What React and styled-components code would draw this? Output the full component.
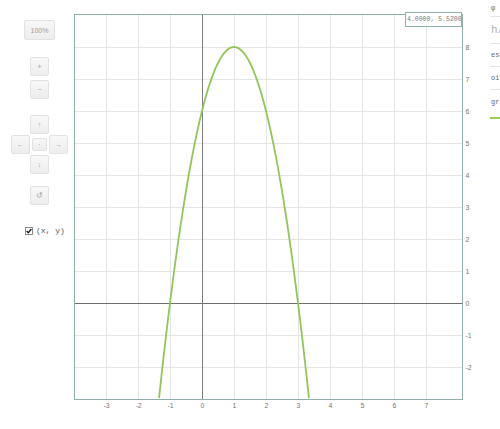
import React from 'react';
import styled, { createGlobalStyle } from 'styled-components';

const GlobalStyle = createGlobalStyle`
  html, body {
    margin: 0;
    padding: 0;
    background: #ffffff;
    font-family: "Liberation Sans", Arial, sans-serif;
  }
`;

const Page = styled.div`
  display: flex;
  width: 500px;
  height: 429px;
  overflow: hidden;
`;

/* left control column */
const Controls = styled.div`
  width: 74px;
  flex-shrink: 0;
  box-sizing: border-box;
  padding: 20px 0 0 5px;
  display: flex;
  flex-direction: column;
  align-items: center;
`;

const Btn = styled.div`
  box-sizing: border-box;
  width: ${(p) => p.$w || 19}px;
  height: ${(p) => p.$h || 19}px;
  margin-top: ${(p) => p.$mt || 0}px;
  display: flex;
  align-items: center;
  justify-content: center;
  background: linear-gradient(#f8f8f8, #ededed);
  border: 1px solid #e2e2e2;
  border-radius: 2px;
  color: #a0a0a0;
  font-size: ${(p) => p.$fs || 7}px;
  line-height: 1;
`;

const DPad = styled.div`
  margin-top: 16px;
  display: grid;
  grid-template-columns: 19px 19px 19px;
  grid-template-rows: 19px 19px 19px;
  column-gap: 0;
  row-gap: 1px;
  align-items: center;
  justify-items: center;
`;

const Cell = styled.div`
  grid-column: ${(p) => p.$col};
  grid-row: ${(p) => p.$row};
`;

const CheckRow = styled.label`
  align-self: flex-start;
  margin: 21px 0 0 20px;
  display: flex;
  align-items: center;
  gap: 3px;
  font-family: "Liberation Mono", "DejaVu Sans Mono", monospace;
  font-size: 8px;
  color: #555;
`;

const Box = styled.span`
  width: 8px;
  height: 8px;
  box-sizing: border-box;
  border: 1px solid #8a8a8a;
  background: #fff;
  display: flex;
  align-items: center;
  justify-content: center;
`;

/* plot */
const PlotWrap = styled.div`
  position: relative;
  width: 416px;
  flex-shrink: 0;
  height: 429px;
`;

const Readout = styled.div`
  position: absolute;
  left: 331px;
  top: 12px;
  width: 57px;
  height: 15px;
  box-sizing: border-box;
  border: 1px solid #8fb0ad;
  background: #fff;
  font-family: "Liberation Mono", "DejaVu Sans Mono", monospace;
  font-size: 6.5px;
  color: #7a7a7a;
  line-height: 13px;
  padding-left: 1px;
  white-space: nowrap;
  overflow: hidden;
`;

/* right side panel, mostly cut off */
const Side = styled.div`
  flex: 1;
  overflow: hidden;
  display: flex;
  flex-direction: column;
  font-family: "Liberation Mono", "DejaVu Sans Mono", monospace;
  color: #666;
`;

const SideRow = styled.div`
  height: ${(p) => p.$h}px;
  box-sizing: border-box;
  display: flex;
  align-items: center;
  padding-left: 1px;
  white-space: nowrap;
  font-size: ${(p) => p.$fs || 7}px;
  color: ${(p) => p.$c || '#666'};
  border-bottom: ${(p) => (p.$line ? '1px solid #e4e4e4' : 'none')};
`;

const GreenLine = styled.div`
  height: 2px;
  width: 30px;
  background: #9ccc5a;
  margin-top: 3px;
`;

const X0 = 128;
const Y0 = 303;
const U = 32;
const LEFT = 0.5;
const RIGHT = 388.5;
const TOP = 14.5;
const BOTTOM = 399.5;

const sx = (x) => X0 + U * x;
const sy = (y) => Y0 - U * y;
const f = (x) => -2 * x * x + 4 * x + 6;

function curvePath() {
  const pts = [];
  const x1 = 1 - Math.sqrt((8 + 2.97) / 2);
  const x2 = 1 + Math.sqrt((8 + 2.97) / 2);
  for (let i = 0; i <= 200; i++) {
    const x = x1 + ((x2 - x1) * i) / 200;
    pts.push(`${sx(x).toFixed(2)},${sy(f(x)).toFixed(2)}`);
  }
  return 'M' + pts.join('L');
}

function Graph() {
  const xs = [-3, -2, -1, 1, 2, 3, 4, 5, 6, 7];
  const ys = [-2, -1, 1, 2, 3, 4, 5, 6, 7, 8];
  return (
    <svg width="416" height="429" style={{ display: 'block' }}>
      {xs.map((x) => (
        <line key={'gx' + x} x1={sx(x) + 0.5} x2={sx(x) + 0.5} y1={TOP} y2={BOTTOM} stroke="#e3e6e6" strokeWidth="1" />
      ))}
      {ys.map((y) => (
        <line key={'gy' + y} x1={LEFT} x2={RIGHT} y1={sy(y) + 0.5} y2={sy(y) + 0.5} stroke="#e3e6e6" strokeWidth="1" />
      ))}
      <line x1={sx(0) + 0.5} x2={sx(0) + 0.5} y1={TOP} y2={BOTTOM} stroke="#7d7d7d" strokeWidth="1" />
      <line x1={LEFT} x2={RIGHT} y1={sy(0) + 0.5} y2={sy(0) + 0.5} stroke="#6f6f6f" strokeWidth="1" />
      <path d={curvePath()} fill="none" stroke="#92c655" strokeWidth="1.8" />
      <rect x={LEFT} y={TOP} width={RIGHT - LEFT} height={BOTTOM - TOP} fill="none" stroke="#8fb0ad" strokeWidth="1" />
      <g fontFamily="Liberation Sans, Arial, sans-serif" fontSize="7" fill="#777">
        {[-3, -2, -1, 0, 1, 2, 3, 4, 5, 6, 7].map((x) => (
          <text key={'lx' + x} x={sx(x) + 0.5} y={408} textAnchor="middle">{x}</text>
        ))}
        {[-2, -1, 0, 1, 2, 3, 4, 5, 6, 7, 8].map((y) => (
          <text key={'ly' + y} x={RIGHT + 3} y={sy(y) + 3}>{y}</text>
        ))}
      </g>
    </svg>
  );
}

const Check = () => (
  <svg width="6" height="6" viewBox="0 0 6 6">
    <path d="M0.6 3.1 L2.3 4.8 L5.4 1" fill="none" stroke="#222" strokeWidth="1.4" />
  </svg>
);

export default function App() {
  return (
    <>
      <GlobalStyle />
      <Page>
        <Controls>
          <Btn $w={31} $h={20}>100%</Btn>
          <Btn $mt={17}>+</Btn>
          <Btn $mt={4}>−</Btn>
          <DPad>
            <Cell $col={2} $row={1}><Btn>↑</Btn></Cell>
            <Cell $col={1} $row={2}><Btn>←</Btn></Cell>
            <Cell $col={2} $row={2}><Btn $w={15} $h={13}>·</Btn></Cell>
            <Cell $col={3} $row={2}><Btn>→</Btn></Cell>
            <Cell $col={2} $row={3}><Btn>↓</Btn></Cell>
          </DPad>
          <Btn $mt={12} $fs={8}>↺</Btn>
          <CheckRow>
            <Box><Check /></Box>
            (x, y)
          </CheckRow>
        </Controls>
        <PlotWrap>
          <Graph />
          <Readout>4.0000, 5.5200</Readout>
        </PlotWrap>
        <Side>
          <SideRow $h={17} $line>φ</SideRow>
          <SideRow $h={27} $line $fs={11} $c="#b0b0b0">h/</SideRow>
          <SideRow $h={23} $line>es</SideRow>
          <SideRow $h={23} $line>oi</SideRow>
          <SideRow $h={24}>gr</SideRow>
          <GreenLine />
        </Side>
      </Page>
    </>
  );
}
